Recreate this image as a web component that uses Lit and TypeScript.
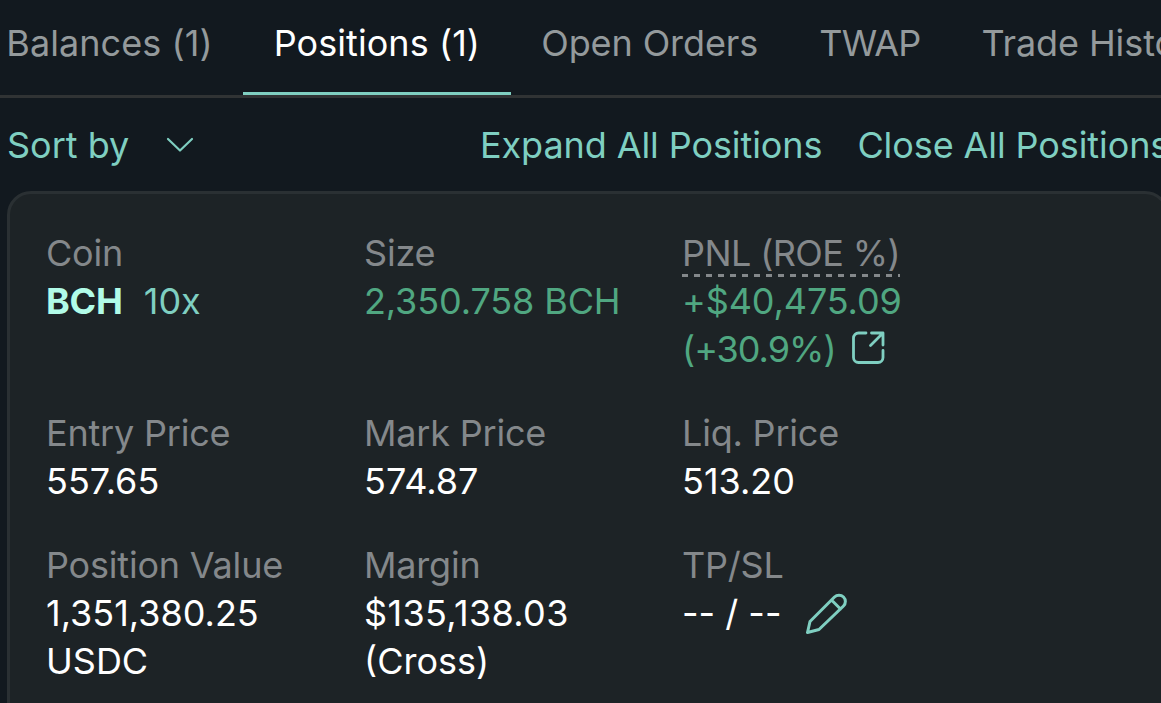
import { LitElement, html, css, svg } from 'lit';
import { customElement, property } from 'lit/decorators.js';
import { classMap } from 'lit/directives/class-map.js';

const chevronIcon = html`
  <svg class="chevron" width="30" height="20" viewBox="0 0 30 20" fill="none">
    <path d="M3 4L15 15.5L27 4" stroke="currentColor" stroke-width="2.2" stroke-linecap="round" stroke-linejoin="round" />
  </svg>
`;

const shareIcon = html`
  <svg class="share" width="36" height="36" viewBox="0 0 36 36" fill="none">
    ${svg`<path d="M15 3H7.5A5 5 0 0 0 2.5 8V27.500A5 5 0 0 0 7.500 32.500H27A5 5 0 0 0 32 27.500V20.500M20.500 3H32V15M32 3L19.500 15.500"
      stroke="currentColor" stroke-width="2.800" stroke-linecap="round" stroke-linejoin="round" />`}
  </svg>
`;

const pencilIcon = html`
  <svg class="pencil" width="42" height="42" viewBox="0 0 42 42" fill="none">
    ${svg`<path d="M2.500 39.500L5 28.500L29.500 4A6.200 6.200 0 0 1 38.500 13L14 36.500ZM26.500 7L35.500 16"
      stroke="currentColor" stroke-width="3" stroke-linecap="round" stroke-linejoin="round" />`}
  </svg>
`;

@customElement('tab-bar')
export class TabBar extends LitElement {
  static styles = css`
    :host {
      display: block;
      border-bottom: 3px solid #303334;
    }

    .tabs {
      display: flex;
      height: 95px;
      margin-left: -24.3px;
    }

    .tab {
      display: flex;
      flex: none;
      align-items: center;
      box-sizing: border-box;
      padding: 0 30.6px 7px;
      border-bottom: 3px solid transparent;
      color: #949a9c;
      letter-spacing: -0.1px;
      white-space: nowrap;
    }

    .counted {
      letter-spacing: 0.06px;
    }

    .acronym {
      letter-spacing: -0.9px;
    }

    .active {
      color: #fff;
      border-bottom-color: #7fcfc1;
    }
  `;

  @property({ type: Array })
  tabs: string[] = [];

  @property({ type: String })
  selected = '';

  render() {
    return html`
      <div class="tabs">
        ${this.tabs.map((tab) => {
          const classes = {
            tab: true,
            counted: tab.endsWith(')'),
            acronym: tab === tab.toUpperCase(),
            active: tab === this.selected,
          };
          return html`<div class=${classMap(classes)}>${tab}</div>`;
        })}
      </div>
    `;
  }
}

@customElement('position-card')
export class PositionCard extends LitElement {
  static styles = css`
    :host {
      display: grid;
      grid-template-columns: repeat(3, 318px);
      align-content: start;
      row-gap: 36px;
      box-sizing: border-box;
      padding: 35px 36px;
      border: 3px solid #2a3033;
      border-radius: 24px;
      background: #1d2326;
      color: #fff;
    }

    .label {
      color: #84888b;
      letter-spacing: -0.2px;
    }

    .dashed {
      height: 48px;
      box-sizing: border-box;
      background: repeating-linear-gradient(90deg, #84888b 0 6px, transparent 6px 12px) left bottom / 100% 3px no-repeat;
      letter-spacing: -0.6px;
    }

    .green {
      color: #50a781;
      letter-spacing: -0.12px;
    }

    .ratio {
      letter-spacing: -1px;
    }

    .coin {
      color: #b1fbe8;
      font-weight: 700;
      letter-spacing: -0.2px;
    }

    .leverage {
      margin-left: 21px;
      color: #7fcfc1;
    }

    .line {
      display: flex;
      align-items: center;
      height: 48px;
      white-space: nowrap;
    }

    .margin {
      letter-spacing: 0.35px;
    }

    .share {
      margin: 0 0 2px 15px;
      color: #7fcfc1;
    }

    .pencil {
      margin: 1px 0 0 23.5px;
      color: #7fcfc1;
    }
  `;

  render() {
    return html`
      <div>
        <div class="label">Coin</div>
        <div class="line"><span class="coin">BCH</span><span class="leverage">10x</span></div>
      </div>
      <div>
        <div class="label">Size</div>
        <div class="line green">2,350.758 BCH</div>
      </div>
      <div>
        <div class="line"><span class="label dashed">PNL (ROE %)</span></div>
        <div class="line green">+$40,475.09</div>
        <div class="line green ratio">(+30.9%)${shareIcon}</div>
      </div>
      <div>
        <div class="label">Entry Price</div>
        <div class="line">557.65</div>
      </div>
      <div>
        <div class="label">Mark Price</div>
        <div class="line">574.87</div>
      </div>
      <div>
        <div class="label">Liq. Price</div>
        <div class="line">513.20</div>
      </div>
      <div>
        <div class="label">Position Value</div>
        <div class="line">1,351,380.25</div>
        <div class="line">USDC</div>
      </div>
      <div>
        <div class="label">Margin</div>
        <div class="line margin">$135,138.03</div>
        <div class="line">(Cross)</div>
      </div>
      <div>
        <div class="label">TP/SL</div>
        <div class="line">-- / --${pencilIcon}</div>
      </div>
    `;
  }
}

@customElement('app-root')
export class AppRoot extends LitElement {
  static styles = css`
    :host {
      display: flex;
      flex-direction: column;
      height: 703px;
      overflow: hidden;
      background: #12191f;
      font-family: Inter, 'Liberation Sans', sans-serif;
      font-size: 36px;
      line-height: 48px;
    }

    .toolbar {
      display: flex;
      flex: none;
      align-items: center;
      height: 93px;
      padding: 1px 0 0 7px;
      box-sizing: border-box;
      color: #7fcfc1;
      white-space: nowrap;
    }

    .sort {
      display: flex;
      flex: none;
      align-items: center;
      width: 473px;
    }

    .chevron {
      margin: 0 0 1px 35.5px;
    }

    .action {
      margin-right: 35px;
      letter-spacing: -0.09px;
    }

    position-card {
      flex: none;
      width: 1162px;
      height: 560px;
      margin-left: 7px;
    }
  `;

  render() {
    return html`
      <tab-bar
        .tabs=${['Balances (1)', 'Positions (1)', 'Open Orders', 'TWAP', 'Trade History']}
        selected="Positions (1)"
      ></tab-bar>
      <div class="toolbar">
        <div class="sort">Sort by${chevronIcon}</div>
        <span class="action">Expand All Positions</span>
        <span class="action">Close All Positions</span>
      </div>
      <position-card></position-card>
    `;
  }
}
